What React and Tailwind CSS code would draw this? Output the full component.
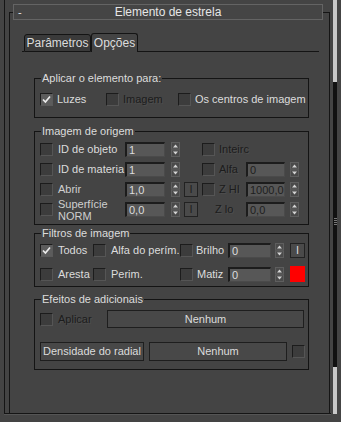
import React from "react";

const DIM = "text-[#1c1c1c] [text-shadow:1px_1px_0_#4e4e4e]";

const Check = ({ checked }) => (
  <span
    className={
      checked
        ? "w-[13px] h-[13px] shrink-0 border border-[#1c1c1c] border-r-[#5a5a5a] border-b-[#5a5a5a] bg-[#5c5c5c] flex items-center justify-center"
        : "block w-[13px] h-[13px] shrink-0 border border-[#1c1c1c] border-r-[#555] border-b-[#555] bg-[#3c3c3c]"
    }
  >
    {checked && (
      <svg width="9" height="9" viewBox="0 0 9 9">
        <path d="M1 4.5 L3.4 7 L8 1.5" stroke="#ececec" strokeWidth="1.7" fill="none" />
      </svg>
    )}
  </span>
);

const Spin = () => (
  <svg width="9" height="15" viewBox="0 0 9 15" className="block shrink-0">
    <rect x="0.5" y="0.5" width="8" height="6.5" fill="#4a4a4a" stroke="#5e5e5e" />
    <rect x="0.5" y="8" width="8" height="6.5" fill="#4a4a4a" stroke="#5e5e5e" />
    <path d="M2 5.5 L4.5 2.5 L7 5.5Z" fill="#d4d4d4" />
    <path d="M2 9.5 L4.5 12.5 L7 9.5Z" fill="#d4d4d4" />
  </svg>
);

const Field = ({ v, w, dim }) => (
  <div
    className={`${w} h-[15px] shrink-0 bg-[#575757] border-t-2 border-l-2 border-[#1c1c1c] border-r border-b border-r-[#4a4a4a] border-b-[#4a4a4a] pl-[2px] leading-[12px] overflow-hidden ${
      dim ? "text-[#1e1e1e]" : "text-[#dcdcdc]"
    }`}
  >
    {v}
  </div>
);

const IBtn = ({ dim, w }) => (
  <div
    className={`${w} h-[15px] shrink-0 border border-[#222] bg-[#4a4a4a] flex items-center justify-center ${
      dim ? "text-[#1e1e1e]" : "text-[#dcdcdc]"
    }`}
  >
    I
  </div>
);

const Group = ({ title, className, children }) => (
  <fieldset className={`ml-[24px] w-[275px] border border-[#141414] ${className}`}>
    <legend className="ml-[6px] px-[1px] leading-[13px]">{title}</legend>
    {children}
  </fieldset>
);

export default function App() {
  return (
    <div className="w-[341px] h-[422px] bg-[#444444] flex text-[11px] leading-[13px] text-[#dcdcdc] font-['Liberation_Sans',Arial,sans-serif]">
      <div className="ml-[4px] w-[327px] h-[414px] border-l border-b border-[#151515] shadow-[0_1px_0_#555] pt-[12px] pl-[4px] flex flex-col">
        <div className="w-[321px] flex-1 border-t border-l border-r border-[#151515] flex flex-col">
          {/* rollout header */}
          <div className="mt-[-9px] ml-[3px] w-[310px] h-[16px] border border-[#646464] bg-[#454545] flex items-center">
            <span className="w-[12px] pl-[4px] text-[#e6e6e6]">-</span>
            <span className="flex-1 text-center text-[12px] text-[#e6e6e6]">Elemento de estrela</span>
            <span className="w-[12px]" />
          </div>

          {/* tabs */}
          <div className="mt-[13px] ml-[12px] w-[297px] h-[19px] flex items-end">
            <div className="w-[2px] h-[1px] bg-[#141414]" />
            <div className="w-[67px] h-[18px] border border-[#141414] rounded-t-[3px] bg-[#3a3a3a] flex items-center justify-center text-[12px]">
              Parâmetros
            </div>
            <div className="w-[47px] h-[19px] border-t border-l border-r border-[#141414] rounded-t-[3px] bg-[#444] flex items-center justify-center text-[12px]">
              Opções
            </div>
            <div className="flex-1 h-[1px] bg-[#141414]" />
          </div>

          <Group title="Aplicar o elemento para:" className="mt-[20px]">
            <div className="pl-[5px] pt-[8px] pb-[11px] flex items-center h-[32px] box-border">
              <div className="w-[66px] flex items-center gap-[4px]">
                <Check checked />
                <span>Luzes</span>
              </div>
              <div className="w-[72px] flex items-center gap-[4px]">
                <Check />
                <span className={DIM}>Imagem</span>
              </div>
              <div className="flex items-center gap-[4px]">
                <Check />
                <span>Os centros de imagem</span>
              </div>
            </div>
          </Group>

          <Group title="Imagem de origem" className="mt-[7px]">
            <div className="pl-[5px] pt-[4px] pb-[7px] flex flex-col gap-[5px]">
              <div className="h-[15px] flex items-center">
                <Check />
                <span className="ml-[5px] w-[67px]">ID de objeto</span>
                <Field v="1" w="w-[40px]" />
                <span className="ml-[6px]"><Spin /></span>
                <div className="ml-[4px] w-[14px]" />
                <div className="ml-[4px] w-[13px]"><Check /></div>
                <span className={`ml-[4px] w-[66px] ${DIM}`}>Inteirc</span>
              </div>
              <div className="h-[15px] flex items-center">
                <Check />
                <span className="ml-[5px] w-[67px] whitespace-nowrap">ID de materia</span>
                <Field v="1" w="w-[40px]" />
                <span className="ml-[6px]"><Spin /></span>
                <div className="ml-[4px] w-[14px]" />
                <div className="ml-[4px] w-[13px]"><Check /></div>
                <span className={`ml-[4px] w-[27px] ${DIM}`}>Alfa</span>
                <Field v="0" w="w-[39px]" dim />
                <span className="ml-[5px]"><Spin /></span>
              </div>
              <div className="h-[15px] flex items-center">
                <Check />
                <span className="ml-[5px] w-[67px] text-[#cfcfcf]">Abrir</span>
                <Field v="1,0" w="w-[40px]" />
                <span className="ml-[6px]"><Spin /></span>
                <div className="ml-[4px]"><IBtn w="w-[14px]" dim /></div>
                <div className="ml-[4px] w-[13px]"><Check /></div>
                <span className={`ml-[4px] w-[27px] ${DIM}`}>Z HI</span>
                <Field v="1000,0" w="w-[39px]" dim />
                <span className="ml-[5px]"><Spin /></span>
              </div>
              <div className="h-[15px] flex items-center">
                <Check />
                <span className="ml-[5px] w-[67px] leading-[12px] text-[#cfcfcf]">
                  Superfície
                  <br />
                  NORM
                </span>
                <Field v="0,0" w="w-[40px]" />
                <span className="ml-[6px]"><Spin /></span>
                <div className="ml-[4px]"><IBtn w="w-[14px]" dim /></div>
                <span className={`ml-[4px] w-[44px] pl-[13px] ${DIM}`}>Z lo</span>
                <Field v="0,0" w="w-[39px]" dim />
                <span className="ml-[5px]"><Spin /></span>
              </div>
            </div>
          </Group>

          <Group title="Filtros de imagem" className="mt-[2px]">
            <div className="pl-[5px] pt-[3px] pb-[4px] flex flex-col gap-[8px]">
              <div className="h-[15px] flex items-center">
                <Check checked />
                <span className="ml-[5px] w-[35px]">Todos</span>
                <Check />
                <span className="ml-[5px] w-[69px] whitespace-nowrap">Alfa do perím.</span>
                <Check />
                <span className="ml-[3px] w-[32px]">Brilho</span>
                <Field v="0" w="w-[43px]" />
                <span className="ml-[4px]"><Spin /></span>
                <div className="ml-[6px]"><IBtn w="w-[15px]" /></div>
              </div>
              <div className="h-[16px] flex items-center">
                <Check />
                <span className="ml-[5px] w-[35px]">Aresta</span>
                <Check />
                <span className="ml-[5px] w-[69px]">Perim.</span>
                <Check />
                <span className="ml-[4px] w-[31px]">Matiz</span>
                <Field v="0" w="w-[43px]" />
                <span className="ml-[4px]"><Spin /></span>
                <div className="ml-[6px] w-[15px] h-[16px] bg-[#ff0000]" />
              </div>
            </div>
          </Group>

          <Group title="Efeitos de adicionais" className="mt-[6px]">
            <div className="pl-[5px] pt-[4px] pb-[8px] flex flex-col gap-[14px]">
              <div className="h-[18px] flex items-center">
                <Check />
                <span className={`ml-[5px] w-[49px] ${DIM}`}>Aplicar</span>
                <div className="w-[197px] h-[18px] border border-[#1e1e1e] bg-[#484848] flex items-center justify-center">
                  Nenhum
                </div>
              </div>
              <div className="h-[19px] flex items-center">
                <div className="w-[104px] h-[19px] border border-[#1e1e1e] bg-[#484848] flex items-center justify-center whitespace-nowrap">
                  Densidade do radial
                </div>
                <div className="ml-[5px] w-[138px] h-[19px] border border-[#1e1e1e] bg-[#484848] flex items-center justify-center">
                  Nenhum
                </div>
                <div className="ml-[5px]"><Check /></div>
              </div>
            </div>
          </Group>
        </div>
      </div>

      {/* scrollbar */}
      <div className="ml-[2px] w-[4px] h-[414px] flex flex-col">
        <div className="h-[82px] bg-[#c8c8c8]" />
        <div className="flex-1 bg-[#111] pt-[136px] flex flex-col gap-[1px] items-center">
          <div className="w-[3px] h-[1px] bg-[#777]" />
          <div className="w-[3px] h-[1px] bg-[#777]" />
          <div className="w-[3px] h-[1px] bg-[#777]" />
          <div className="w-[3px] h-[1px] bg-[#777]" />
        </div>
        <div className="h-[47px] bg-[#c8c8c8]" />
      </div>
    </div>
  );
}
